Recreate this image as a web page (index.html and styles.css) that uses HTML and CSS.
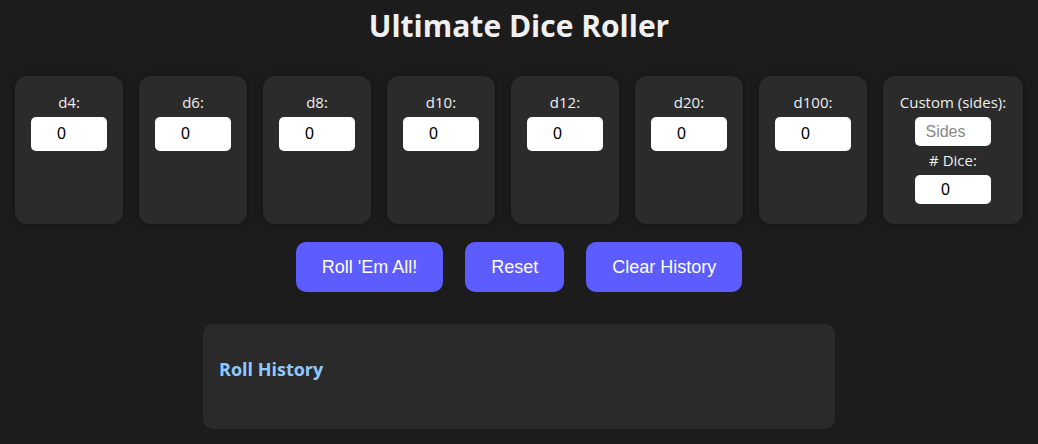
FILE: index.html
```
<!DOCTYPE html>
<html>
<head>
    <title>Ultimate Dice Roller</title>
    <meta charset="UTF-8">
    <link rel="stylesheet" href="styles.css">
</head>
<body>
    <h1>Ultimate Dice Roller</h1>

    <div class="dice-row">
        <div class="dice-card">
            <label for="d4">d4:</label>
            <input type="number" id="d4" value="0" min="0">
        </div>
        <div class="dice-card">
            <label for="d6">d6:</label>
            <input type="number" id="d6" value="0" min="0">
        </div>
        <div class="dice-card">
            <label for="d8">d8:</label>
            <input type="number" id="d8" value="0" min="0">
        </div>
        <div class="dice-card">
            <label for="d10">d10:</label>
            <input type="number" id="d10" value="0" min="0">
        </div>
        <div class="dice-card">
            <label for="d12">d12:</label>
            <input type="number" id="d12" value="0" min="0">
        </div>
        <div class="dice-card">
            <label for="d20">d20:</label>
            <input type="number" id="d20" value="0" min="0">
        </div>
        <div class="dice-card">
            <label for="d100">d100:</label>
            <input type="number" id="d100" value="0" min="0">
        </div>
        <div class="dice-card custom">
            <label for="customSides">Custom (sides):</label>
            <input type="number" id="customSides" placeholder="Sides" min="1">
            <label for="customCount"># Dice:</label>
            <input type="number" id="customCount" value="0" min="0">
        </div>
    </div>

    <div class="buttons">
        <button>Roll 'Em All!</button>
        <button>Reset</button>
        <button>Clear History</button>
    </div>

    <div class="history">
        <h3>Roll History</h3>
        <div id="historyList"></div>
    </div>
</body>
</html>
```

FILE: styles.css
```
body {
    margin: 0;
    background-color: #1c1c1c;
    color: #eee;
    font-family: "Open Sans", "Noto Sans", sans-serif;
}

h1 {
    text-align: center;
    font-size: 30px;
    font-weight: bold;
    margin: 5px 0 30px;
    color: #f0f0f0;
}

.dice-row {
    display: flex;
    justify-content: center;
    gap: 16px;
}

.dice-card {
    display: flex;
    flex-direction: column;
    align-items: center;
    background-color: #2b2b2b;
    border-radius: 12px;
    padding: 16px;
    width: 76px;
    height: 116px;
    box-shadow: 0 0 10px rgba(0, 0, 0, 0.35);
}

/* 自定义骰子卡片更宽 */
.dice-card.custom {
    width: 108px;
}

.dice-card label {
    font-size: 15px;
    line-height: 20px;
    margin-bottom: 5px;
    white-space: nowrap;
}

.dice-card input {
    width: 76px;
    height: 34px;
    box-sizing: border-box;
    border: none;
    border-radius: 5px;
    font-family: "Liberation Sans", Arial, sans-serif;
    font-size: 16px;
    text-align: center;
    color: #000;
    margin-bottom: 4px;
}

.dice-card input::placeholder {
    color: #888;
}

.buttons {
    display: flex;
    justify-content: center;
    gap: 22px;
    margin-top: 18px;
}

button {
    height: 50px;
    padding: 0 26px;
    background-color: #5c5cff;
    color: #fff;
    border: none;
    border-radius: 10px;
    font-family: "Liberation Sans", Arial, sans-serif;
    font-size: 18px;
    cursor: pointer;
}

.history {
    width: 600px;
    margin: 32px auto 0;
    padding: 16px;
    height: 73px;
    background-color: #2a2a2a;
    border-radius: 10px;
}

.history h3 {
    margin: 17px 0 0;
    font-size: 18px;
    color: #8ec9ff;
}
```
